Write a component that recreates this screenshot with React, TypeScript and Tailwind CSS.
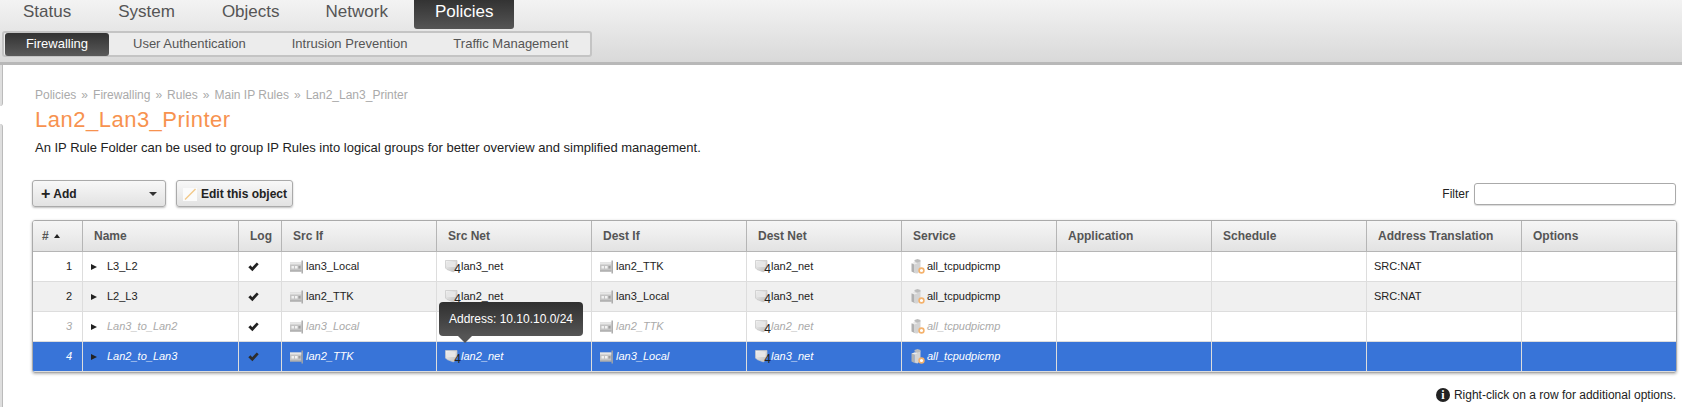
const FF = "font-['Liberation_Sans',Arial,sans-serif]";

function IfIcon() {
  return (
    <svg width="13" height="14" viewBox="0 0 13 14" className="shrink-0">
      <rect x="0" y="2.5" width="11.5" height="9" fill="#c4c4c4" />
      <rect x="0" y="2.5" width="11.5" height="2" fill="#e6e6e6" />
      <rect x="1.5" y="6" width="2.5" height="2.5" fill="#efefef" />
      <rect x="5" y="6" width="2.5" height="2.5" fill="#f2f2f2" />
      <rect x="8.5" y="6" width="2" height="2.5" fill="#9c9c9c" />
      <rect x="0" y="10.5" width="11.5" height="1" fill="#a0a0a0" />
      <rect x="11.5" y="0.5" width="1.4" height="13" fill="#a6a6a6" />
    </svg>
  );
}

function NetIcon() {
  return (
    <span className="relative block h-[15px] w-[15px] shrink-0">
      <svg width="13" height="14" viewBox="0 0 13 14" className="block">
        <defs>
          <linearGradient id="netBody" x1="0" y1="0" x2="1" y2="1">
            <stop offset="0" stopColor="#f4f4f4" />
            <stop offset="1" stopColor="#bcbcbc" />
          </linearGradient>
        </defs>
        <path d="M0.5 1.5h11.5v7.5L8.5 13 2 10.5 0.5 9z" fill="url(#netBody)" stroke="#c6c6c6" strokeWidth="0.7" />
        <path d="M2 3h8.5v5H2z" fill="#e6e6e6" />
      </svg>
      <span className="absolute right-[-1px] top-[5px] text-[12px] not-italic leading-[11px] text-[#222]">4</span>
    </span>
  );
}

function ServiceIcon() {
  return (
    <svg width="14" height="15" viewBox="0 0 14 15" className="shrink-0">
      <path d="M0.5 4.5l3-1v10l3 1-3-.5-3-1.5z" fill="#b0b0b0" />
      <path d="M3.5 3.5l6-1.5v9.5l-3 3-3-1z" fill="#d4d4d4" />
      <path d="M3.5 1l3-1 3 1v1.5l-3 1-3-1z" fill="#bcbcbc" />
      <path d="M0.5 4.5l3-1 3 1-3 1z" fill="#ececec" />
      <circle cx="10.5" cy="11.5" r="2.4" fill="#fff" stroke="#f4b26d" strokeWidth="1.6" />
    </svg>
  );
}

function Check({ color }: { color: string }) {
  return (
    <svg width="11" height="10" viewBox="0 0 11 10" className="block">
      <path d="M0.3 5.2 2.5 3.2l1.7 2L8.8 0.4l1.9 1.8-6.3 7z" fill={color} />
    </svg>
  );
}

const columns = ["Name", "Log", "Src If", "Src Net", "Dest If", "Dest Net", "Service", "Application", "Schedule", "Address Translation", "Options"];

const rows = [
  { n: 1, name: "L3_L2", srcIf: "lan3_Local", srcNet: "lan3_net", dstIf: "lan2_TTK", dstNet: "lan2_net", nat: "SRC:NAT", kind: "normal" },
  { n: 2, name: "L2_L3", srcIf: "lan2_TTK", srcNet: "lan2_net", dstIf: "lan3_Local", dstNet: "lan3_net", nat: "SRC:NAT", kind: "alt" },
  { n: 3, name: "Lan3_to_Lan2", srcIf: "lan3_Local", srcNet: "", dstIf: "lan2_TTK", dstNet: "lan2_net", nat: "", kind: "disabled" },
  { n: 4, name: "Lan2_to_Lan3", srcIf: "lan2_TTK", srcNet: "lan2_net", dstIf: "lan3_Local", dstNet: "lan3_net", nat: "", kind: "selected" },
];

function Row({ r }: { r: (typeof rows)[number] }) {
  const rowCls =
    r.kind === "selected"
      ? "bg-[#3874d8] text-white italic"
      : r.kind === "disabled"
        ? "bg-white text-[#aaaaaa] italic"
        : r.kind === "alt"
          ? "bg-[#f0f0f0] text-[#222]"
          : "bg-white text-[#222]";
  const cell = "h-[30px] border-r border-b border-[#dddddd] p-0 align-middle";
  const last = "h-[30px] border-b border-[#dddddd] p-0 align-middle";
  return (
    <tr className={rowCls}>
      <td className={`${cell} pr-[10px] text-right`}>{r.n}</td>
      <td className={`${cell} pl-[8px]`}>
        <span className="flex items-center">
          <span className="mr-[10px] h-0 w-0 border-y-[3px] border-l-[6px] border-y-transparent border-l-[#222]" />
          {r.name}
        </span>
      </td>
      <td className={`${cell} pl-[9px]`}>
        <Check color={r.kind === "selected" ? "#2d2d2d" : "#222222"} />
      </td>
      <td className={`${cell} pl-[8px]`}>
        <span className="flex items-center gap-[3px]"><IfIcon />{r.srcIf}</span>
      </td>
      <td className={`${cell} pl-[8px]`}>
        {r.srcNet && <span className="flex items-center gap-[1px]"><NetIcon />{r.srcNet}</span>}
      </td>
      <td className={`${cell} pl-[8px]`}>
        <span className="flex items-center gap-[3px]"><IfIcon />{r.dstIf}</span>
      </td>
      <td className={`${cell} pl-[8px]`}>
        <span className="flex items-center gap-[1px]"><NetIcon />{r.dstNet}</span>
      </td>
      <td className={`${cell} pl-[9px]`}>
        <span className="flex items-center gap-[2px]"><ServiceIcon />all_tcpudpicmp</span>
      </td>
      <td className={cell} />
      <td className={cell} />
      <td className={`${cell} pl-[7px]`}>{r.nat}</td>
      <td className={last} />
    </tr>
  );
}

export default function App() {
  return (
    <div className={`${FF} relative h-[407px] w-[1682px] overflow-hidden bg-white text-[12px] text-[#222]`}>
      <header className="h-[65px] border-b-[3px] border-[#b8b8b8] bg-gradient-to-b from-[#f3f3f3] to-[#d9d9d9]">
        <nav className="flex h-[29px] text-[17px] leading-[23px] text-[#555]">
          <span className="ml-[23px]">Status</span>
          <span className="ml-[47px]">System</span>
          <span className="ml-[47px]">Objects</span>
          <span className="ml-[46px]">Network</span>
          <span className="ml-[26px] rounded-b-[3px] bg-gradient-to-b from-[#333333] to-[#555555] px-[21px] text-white">Policies</span>
        </nav>
        <div className="ml-[2px] mt-[2px] flex h-[26px] w-[590px] items-center rounded-[3px] border-2 border-[#c4c4c4] bg-[#ececec] px-[1px] text-[13px] text-[#555]">
          <span className="flex h-[23px] w-[104px] items-center justify-center rounded-[3px] bg-gradient-to-b from-[#333333] to-[#5a5a5a] text-white">Firewalling</span>
          <span className="ml-[24px]">User Authentication</span>
          <span className="ml-[46px]">Intrusion Prevention</span>
          <span className="ml-[46px]">Traffic Management</span>
        </div>
      </header>

      <main className="flex">
        <aside className="flex w-[3px] shrink-0 flex-col">
          <div className="h-[41px] rounded-br-[3px] border-r border-[#bbbbbb] bg-[#dedede]" />
          <div className="h-[18px]" />
          <div className="h-[290px] rounded-tr-[3px] border-r border-[#bbbbbb] bg-[#dedede]" />
        </aside>
        <div className="min-w-0 flex-1">
          <div className="ml-[32px] mt-[23px] text-[12px] leading-[14px] text-[#aaaaaa]">
            <span>Policies</span>
            <span className="mx-[5px]">»</span>Firewalling
            <span className="mx-[5px]">»</span>Rules
            <span className="mx-[5px]">»</span>Main IP Rules
            <span className="mx-[5px]">»</span>Lan2_Lan3_Printer
          </div>
          <h1 className="ml-[32px] mt-[5px] text-[22px] font-normal leading-[26px] tracking-[0.5px] text-[#f7924f]">Lan2_Lan3_Printer</h1>
          <p className="ml-[32px] mt-[7px] text-[13px] leading-[16px] text-[#222]">
            An IP Rule Folder can be used to group IP Rules into logical groups for better overview and simplified management.
          </p>

          <div className="ml-[29px] mr-[6px] mt-[24px] flex h-[27px] items-center">
            <button className="flex h-[27px] w-[134px] items-center justify-between rounded-[3px] border border-[#aaaaaa] bg-gradient-to-b from-[#f8f8f8] to-[#e2e2e2] pl-[8px] pr-[8px] text-[12px] font-bold text-[#222] shadow-[0_1px_2px_rgba(0,0,0,0.25)]">
              <span className="flex items-center">
                <span className="mr-[3px] text-[16px] leading-none">+</span>Add
              </span>
              <span className="h-0 w-0 border-x-[4px] border-t-[4px] border-x-transparent border-t-[#333]" />
            </button>
            <button className="ml-[10px] flex h-[27px] w-[117px] items-center gap-[4px] rounded-[3px] border border-[#aaaaaa] bg-gradient-to-b from-[#f8f8f8] to-[#e2e2e2] pl-[6px] text-[12px] font-bold text-[#222] shadow-[0_1px_2px_rgba(0,0,0,0.25)]">
              <svg width="14" height="14" viewBox="0 0 14 14" className="shrink-0">
                <rect x="0" y="1" width="14" height="13" fill="#fbfbfb" />
                <path d="M2 12.5 12.5 2" stroke="#f2c98a" strokeWidth="1.5" />
              </svg>
              Edit this object
            </button>
            <span className="ml-auto text-[12px] text-[#222]">Filter</span>
            <input className="ml-[5px] h-[22px] w-[202px] rounded-[3px] border border-[#aaaaaa] bg-white shadow-[0_1px_1px_rgba(0,0,0,0.15)]" />
          </div>

          <div className="relative ml-[29px] mt-[13px] w-[1645px] overflow-hidden rounded-[3px] border border-[#aaaaaa] shadow-[0_1px_3px_rgba(0,0,0,0.3)]">
            <table className="w-full table-fixed border-separate border-spacing-0 text-[11px]">
              <colgroup>
                <col className="w-[50px]" />
                <col className="w-[156px]" />
                <col className="w-[43px]" />
                <col className="w-[155px]" />
                <col className="w-[155px]" />
                <col className="w-[155px]" />
                <col className="w-[155px]" />
                <col className="w-[155px]" />
                <col className="w-[155px]" />
                <col className="w-[155px]" />
                <col className="w-[155px]" />
                <col />
              </colgroup>
              <thead>
                <tr className="bg-gradient-to-b from-[#f6f6f6] to-[#e2e2e2] text-[12px] font-bold text-[#555]">
                  <th className="h-[31px] border-b border-r border-[#b5b5b5] pl-[9px] text-left font-bold">
                    <span className="flex items-center gap-[5px]">#<span className="h-0 w-0 border-x-[3.5px] border-b-[4px] border-x-transparent border-b-[#222]" /></span>
                  </th>
                  {columns.map((c, i) => (
                    <th
                      key={c}
                      className={`h-[31px] border-b border-[#b5b5b5] pl-[11px] text-left font-bold ${i === columns.length - 1 ? "" : "border-r"}`}
                    >
                      {c}
                    </th>
                  ))}
                </tr>
              </thead>
              <tbody>
                {rows.map((r) => (
                  <Row key={r.n} r={r} />
                ))}
              </tbody>
            </table>
          </div>

          <div className="mr-[6px] mt-[13px] flex items-center justify-end gap-[4px] text-[12px] text-[#222]">
            <span className="flex h-[14px] w-[14px] items-center justify-center rounded-full bg-[#222] font-['Liberation_Serif',serif] text-[12px] font-bold text-white">i</span>
            Right-click on a row for additional options.
          </div>
        </div>
      </main>

      <div className="absolute left-[439px] top-[302px] flex h-[34px] w-[144px] items-center justify-center rounded-[4px] bg-gradient-to-b from-[#303030] to-[#555555] text-[12px] text-white">
        Address: 10.10.10.0/24
        <span className="absolute left-[19px] top-[34px] h-0 w-0 border-x-[7px] border-t-[7px] border-x-transparent border-t-[#555555]" />
      </div>
    </div>
  );
}
